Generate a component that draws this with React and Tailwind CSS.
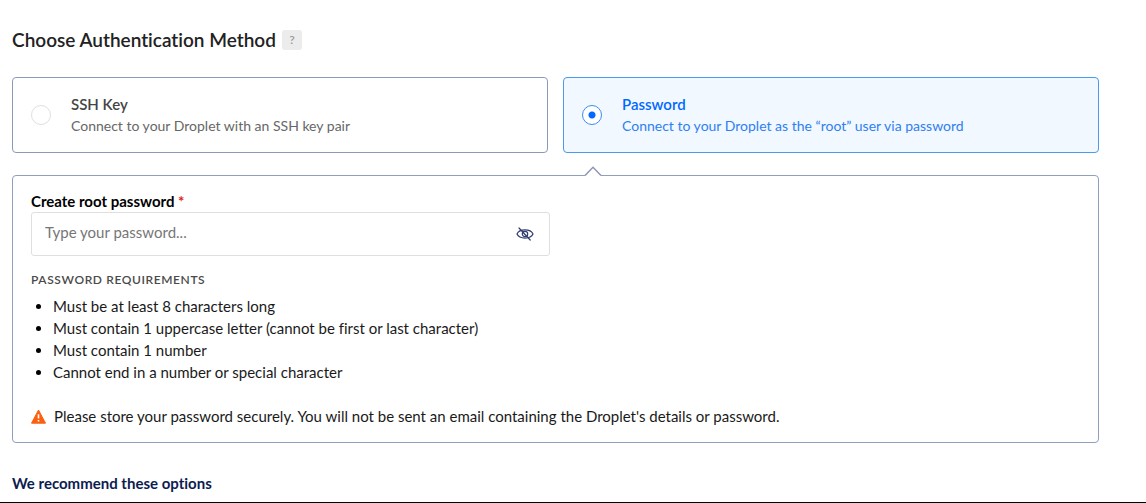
import { useState } from "react";

const METHODS = [
  { id: "ssh", title: "SSH Key", text: "Connect to your Droplet with an SSH key pair" },
  { id: "password", title: "Password", text: "Connect to your Droplet as the “root” user via password" },
];

const REQUIREMENTS = [
  "Must be at least 8 characters long",
  "Must contain 1 uppercase letter (cannot be first or last character)",
  "Must contain 1 number",
  "Cannot end in a number or special character",
];

function Caret() {
  return (
    <svg className="absolute left-[21px] top-[89px]" width="18" height="10" viewBox="0 0 18 10" aria-hidden="true">
      <path d="M1 10 L1 9.5 L9 1.3 L17 9.5 L17 10 Z" fill="#fff" />
      <path d="M1 9.5 L9 1.3 L17 9.5" fill="none" stroke="#8f95b3" strokeWidth="1.4" />
    </svg>
  );
}

function MethodCard({ method, selected, onSelect }) {
  return (
    <div className="relative">
      <label
        className={
          selected
            ? "flex h-[76px] cursor-pointer items-center gap-5 rounded border border-[#4a9be8] bg-[#f2f8ff] px-[18px]"
            : "flex h-[76px] cursor-pointer items-center gap-5 rounded border border-[#8a9bb8] bg-white px-[18px]"
        }
      >
        <input
          type="radio"
          name="method"
          checked={selected}
          onChange={onSelect}
          className="size-5 shrink-0 appearance-none rounded-full border border-[#dfdfdf] bg-white checked:border-[#3b8cf0] checked:bg-[radial-gradient(circle,#0069ff_3px,#ffffff_4px)]"
        />
        <span className="flex flex-col">
          <span className={selected ? "text-[15px] leading-[22px] font-semibold text-[#0069ff]" : "text-[15px] leading-[22px] font-semibold text-[#444]"}>
            {method.title}
          </span>
          <span className={selected ? "text-[14px] leading-[22px] text-[#2f7ff0]" : "text-[14px] leading-[22px] text-[#676767]"}>
            {method.text}
          </span>
        </span>
      </label>
      {selected && <Caret />}
    </div>
  );
}

function EyeOff() {
  return (
    <svg width="18" height="16" viewBox="0 0 18 16" fill="none" stroke="#2f3d70" strokeWidth="1.2" strokeLinecap="round" aria-hidden="true">
      <path d="M1 8 C3.5 2.6 14.5 2.6 17 8 C14.5 13.4 3.5 13.4 1 8 Z" />
      <circle cx="9" cy="8" r="2.7" />
      <path d="M3 2 L14.2 14" />
    </svg>
  );
}

export default function App() {
  const [method, setMethod] = useState("password");
  const [visible, setVisible] = useState(false);

  return (
    <main className="border-b border-black bg-white pt-7 pr-[47px] pb-2 pl-3 font-['Lato',sans-serif] [font-variant-ligatures:none]">
      <div className="flex items-center gap-[6px]">
        <h2 className="text-[19px] leading-6 font-semibold text-[#222]">Choose Authentication Method</h2>
        <button type="button" aria-label="Help" className="size-5 rounded-[3px] bg-[#ececec] text-[12px] leading-5 font-semibold text-[#999]">
          ?
        </button>
      </div>

      <div className="mt-[25px] grid grid-cols-2 gap-[15px]">
        {METHODS.map((m) => (
          <MethodCard key={m.id} method={m} selected={m.id === method} onSelect={() => setMethod(m.id)} />
        ))}
      </div>

      <section className="mt-[22px] rounded border border-[#8f9fbd] px-[18px] pt-[14px] pb-[15px]">
        <label htmlFor="root-password" className="block text-[15px] leading-[22px] font-bold text-black">
          Create root password <span className="text-[#e02020]">*</span>
        </label>
        <div className="flex h-11 w-[519px] max-w-full items-center rounded-[3px] border border-[#dfdfdf] pr-[15px] pl-[13px]">
          <input
            id="root-password"
            type={visible ? "text" : "password"}
            placeholder="Type your password..."
            className="min-w-0 flex-1 pb-1 text-[15px] leading-[22px] outline-none placeholder:text-[#767676]"
          />
          <button type="button" aria-label="Show password" onClick={() => setVisible(!visible)}>
            <EyeOff />
          </button>
        </div>

        <h3 className="mt-[15px] text-[12px] leading-[18px] font-semibold tracking-wider text-[#4a4a4a] uppercase">Password requirements</h3>
        <ul className="mt-[6px] list-disc pl-[22px] text-[15px] leading-[22px] text-[#1a1a1a] marker:text-black">
          {REQUIREMENTS.map((r) => (
            <li key={r}>{r}</li>
          ))}
        </ul>

        <p className="mt-[22px] flex items-center gap-2 text-[15px] leading-[22px] text-[#1a1a1a]">
          <svg width="15" height="15" viewBox="0 0 15 15" className="shrink-0" aria-hidden="true">
            <path d="M7.5 1 L14.5 14.2 L0.5 14.2 Z" fill="#fa6010" stroke="#fa6010" strokeWidth="1" strokeLinejoin="round" />
            <path d="M7.5 5.2 V9.6 M7.5 11 V12.6" stroke="#fff" strokeWidth="1.6" />
          </svg>
          Please store your password securely. You will not be sent an email containing the Droplet's details or password.
        </p>
      </section>

      <h3 className="mt-[29px] text-[15px] leading-[22px] font-bold text-[#0c1c50]">We recommend these options</h3>
    </main>
  );
}
